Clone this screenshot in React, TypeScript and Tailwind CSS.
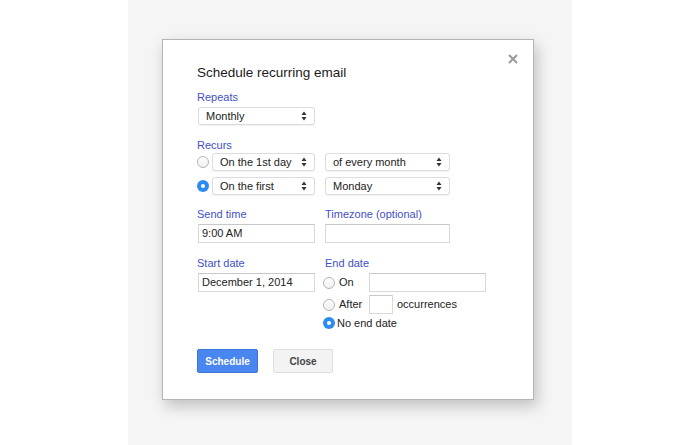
import React from 'react';

const label = "text-[11px] leading-[15px] text-[#4151c5]";

function Arrows() {
  return (
    <svg width="6" height="10" viewBox="0 0 6 10" className="shrink-0">
      <path d="M0.5 4 L3 0.5 L5.5 4 Z" fill="#333" />
      <path d="M0.5 6 L3 9.5 L5.5 6 Z" fill="#333" />
    </svg>
  );
}

function Select({ value, width }: { value: string; width: string }) {
  return (
    <div
      className={`${width} h-[18px] flex items-center justify-between pl-[7px] pr-[7px] bg-white border border-[#dcdcdc] rounded-[3px] shadow-[0_1px_1px_rgba(0,0,0,0.06)] text-[11px] text-[#222] whitespace-nowrap`}
    >
      <span>{value}</span>
      <Arrows />
    </div>
  );
}

function Input({ value, width }: { value?: string; width: string }) {
  return (
    <div
      className={`${width} h-[19px] flex items-center pl-[3px] bg-white border border-[#d9d9d9] border-t-[#c8c8c8] text-[11px] text-[#222] whitespace-nowrap`}
    >
      {value}
    </div>
  );
}

function Radio({ checked }: { checked?: boolean }) {
  if (checked) {
    return (
      <div className="w-[12px] h-[12px] rounded-full bg-[#2d8cf0] flex items-center justify-center shrink-0">
        <div className="w-[4px] h-[4px] rounded-full bg-white" />
      </div>
    );
  }
  return (
    <div className="w-[12px] h-[12px] rounded-full border border-[#b5b5b5] bg-gradient-to-b from-white to-[#f0f0f0] shrink-0" />
  );
}

export default function App() {
  return (
    <div className="w-[700px] h-[445px] bg-white flex justify-center font-['Liberation_Sans',Arial,sans-serif] overflow-hidden">
      <div className="w-[444px] h-full bg-[#f5f5f5] pl-[34px] pt-[39px]">
        <div className="relative w-[372px] h-[361px] bg-white border border-[#b4b4b4] shadow-[3px_6px_14px_rgba(0,0,0,0.22)] pl-[34px] pt-[23px]">
          <svg
            className="absolute right-[15px] top-[14px]"
            width="10"
            height="10"
            viewBox="0 0 10 10"
          >
            <path d="M1 1 L9 9 M9 1 L1 9" stroke="#9a9a9a" strokeWidth="2" />
          </svg>

          <div className="text-[13.5px] leading-[20px] text-[#1a1a1a]">Schedule recurring email</div>

          <div className={`${label} mt-[7px]`}>Repeats</div>
          <div className="mt-[2px] pl-[1px]">
            <Select value="Monthly" width="w-[117px]" />
          </div>

          <div className={`${label} mt-[13px]`}>Recurs</div>
          <div className="flex flex-col gap-[6px]">
            <div className="flex items-center">
              <Radio />
              <div className="ml-[3px]">
                <Select value="On the 1st day" width="w-[103px]" />
              </div>
              <div className="ml-[10px]">
                <Select value="of every month" width="w-[125px]" />
              </div>
            </div>
            <div className="flex items-center">
              <Radio checked />
              <div className="ml-[3px]">
                <Select value="On the first" width="w-[103px]" />
              </div>
              <div className="ml-[10px]">
                <Select value="Monday" width="w-[125px]" />
              </div>
            </div>
          </div>

          <div className="flex mt-[12px]">
            <div className="w-[128px]">
              <div className={label}>Send time</div>
              <div className="mt-[2px] pl-[1px]">
                <Input value="9:00 AM" width="w-[117px]" />
              </div>
            </div>
            <div>
              <div className={label}>Timezone (optional)</div>
              <div className="mt-[2px]">
                <Input width="w-[125px]" />
              </div>
            </div>
          </div>

          <div className="flex mt-[13px]">
            <div className="w-[126px]">
              <div className={label}>Start date</div>
              <div className="mt-[2px] pl-[1px]">
                <Input value="December 1, 2014" width="w-[117px]" />
              </div>
            </div>
            <div>
              <div className={`${label} ml-[2px]`}>End date</div>
              <div className="mt-[2px] flex flex-col text-[11px] text-[#222]">
                <div className="flex items-center h-[19px]">
                  <Radio />
                  <span className="ml-[4px] w-[30px]">On</span>
                  <Input width="w-[117px]" />
                </div>
                <div className="flex items-center h-[19px] mt-[3px]">
                  <Radio />
                  <span className="ml-[4px] w-[30px]">After</span>
                  <Input width="w-[24px]" />
                  <span className="ml-[4px]">occurrences</span>
                </div>
                <div className="flex items-center h-[16px] mt-[1px]">
                  <Radio checked />
                  <span className="ml-[2px]">No end date</span>
                </div>
              </div>
            </div>
          </div>

          <div className="flex gap-[15px] mt-[18px]">
            <div className="w-[61px] h-[24px] flex items-center justify-center bg-[#4a86f0] border border-[#3f74d8] rounded-[2px] text-white text-[10px] font-bold">
              Schedule
            </div>
            <div className="w-[60px] h-[24px] flex items-center justify-center bg-[#f3f3f3] border border-[#dedede] rounded-[2px] text-[#444] text-[10px] font-bold">
              Close
            </div>
          </div>
        </div>
      </div>
    </div>
  );
}
